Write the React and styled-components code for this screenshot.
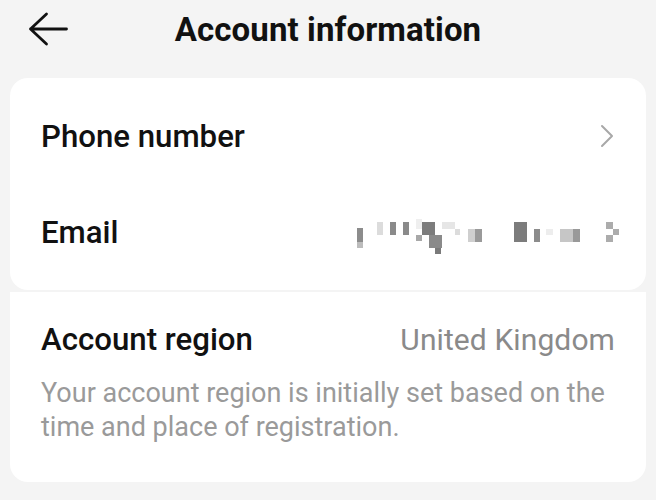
import React from 'react'
import styled, { createGlobalStyle } from 'styled-components'

const GlobalStyle = createGlobalStyle`
  html, body {
    margin: 0;
    padding: 0;
    background: #f4f4f4;
    font-family: Roboto, "Noto Sans", "Liberation Sans", sans-serif;
    -webkit-font-smoothing: antialiased;
  }
`

const Page = styled.div`
  width: 656px;
  height: 500px;
  background: #f4f4f4;
  display: flex;
  flex-direction: column;
  padding: 0 10px;
  box-sizing: border-box;
`

const Header = styled.header`
  height: 58px;
  display: flex;
  align-items: center;
  justify-content: center;
  position: relative;
  margin-bottom: 20px;
`

const BackBtn = styled.button`
  position: absolute;
  left: 18px;
  top: 12px;
  width: 40px;
  height: 34px;
  padding: 0;
  border: 0;
  background: none;
  display: flex;
  align-items: center;
  justify-content: center;
`

const Title = styled.h1`
  margin: 0;
  font-size: 33px;
  font-weight: 700;
  color: #111;
  letter-spacing: 0.1px;
`

const Card = styled.section`
  background: #fff;
  border-radius: ${p => p.$top ? '18px' : '0 0 18px 18px'};
  padding: ${p => p.$pad};
  margin-bottom: ${p => p.$gap || 0};
`

const Row = styled.div`
  height: 96px;
  display: flex;
  align-items: center;
  justify-content: space-between;
  padding: 0 31px;
`

const Label = styled.span`
  font-size: 31.2px;
  font-weight: 500;
  color: #111;
`

const Value = styled.span`
  font-size: 30px;
  font-weight: 400;
  color: #8a8a8a;
  letter-spacing: 0.1px;
`

const Note = styled.p`
  margin: 19px 31px 0;
  font-size: 27px;
  line-height: 34px;
  color: #9a9a9a;
`

const RegionHead = styled.div`
  display: flex;
  justify-content: space-between;
  align-items: center;
  padding: 0 31px;
  height: 36px;
`

const Chevron = () => (
  <svg width="16" height="26" viewBox="0 0 16 26">
    <path d="M3 3 L13 13 L3 23" fill="none" stroke="#a8a8a8" strokeWidth="2" strokeLinecap="round" strokeLinejoin="round" />
  </svg>
)

const ArrowLeft = () => (
  <svg width="40" height="34" viewBox="0 0 40 34">
    <path d="M38.5 17 H2.5 M18.5 2 L2.5 17 L18.5 32" fill="none" stroke="#111" strokeWidth="2.8" strokeLinecap="round" strokeLinejoin="round" />
  </svg>
)

// pixelated (redacted) email address
const blocks = [
  [0, 9, 6, 14, '#8c8c8c'], [0, 23, 6, 6, '#bcbcbc'],
  [20, 3, 6, 13, '#dcdcdc'], [33, 3, 6, 13, '#8a8a8a'], [46, 3, 6, 13, '#8a8a8a'],
  [59, 0, 6, 10, '#efefef'], [59, 16, 6, 6, '#a8a8a8'],
  [65, 3, 13, 13, '#7c7c7c'], [72, 16, 13, 13, '#8a8a8a'], [78, 29, 6, 6, '#7a7a7a'],
  [85, 3, 13, 7, '#e6e6e6'], [98, 10, 5, 6, '#dcdcdc'],
  [111, 10, 13, 13, '#cfcfcf'], [118, 10, 7, 13, '#9a9a9a'],
  [157, 3, 13, 20, '#7c7c7c'], [177, 10, 6, 13, '#8c8c8c'], [189, 10, 7, 6, '#ededed'],
  [203, 10, 13, 13, '#c6c6c6'], [216, 10, 7, 13, '#999'],
  [249, 3, 7, 7, '#acacac'], [256, 10, 6, 6, '#acacac'], [249, 16, 7, 7, '#acacac'],
]

const RedactedBox = styled.span`
  display: flex;
  margin: 10px -4px 0 0;
`

const Redacted = () => (
  <RedactedBox>
    <svg width="262" height="36" viewBox="0 0 262 36">
      {blocks.map(([x, y, w, h, c], i) => (
        <rect key={i} x={x} y={y} width={w} height={h} fill={c} />
      ))}
    </svg>
  </RedactedBox>
)

export default function App() {
  return (
    <>
      <GlobalStyle />
      <Page>
        <Header>
          <BackBtn aria-label="Back"><ArrowLeft /></BackBtn>
          <Title>Account information</Title>
        </Header>

        <Card $top $pad="10px 0" $gap="2px">
          <Row>
            <Label>Phone number</Label>
            <Chevron />
          </Row>
          <Row>
            <Label>Email</Label>
            <Redacted />
          </Row>
        </Card>

        <Card $pad="29px 0 38px">
          <RegionHead>
            <Label>Account region</Label>
            <Value>United Kingdom</Value>
          </RegionHead>
          <Note>
            Your account region is initially set based on the time and place of registration.
          </Note>
        </Card>
      </Page>
    </>
  )
}
